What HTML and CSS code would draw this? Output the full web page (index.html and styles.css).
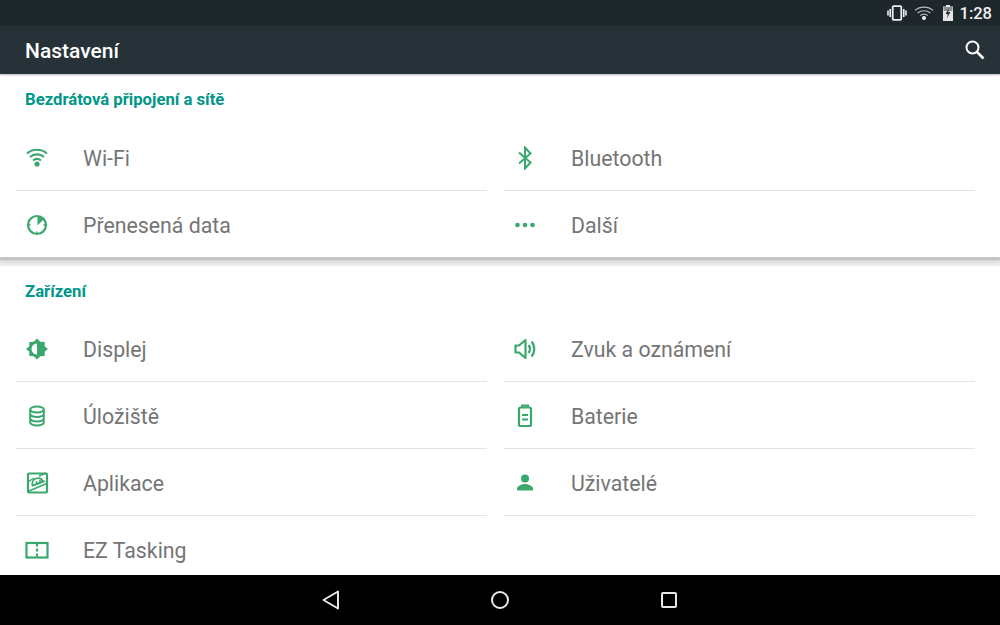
FILE: index.html
```html
<!DOCTYPE html>
<html lang="cs">
<head>
    <meta charset="UTF-8">
    <meta name="viewport" content="width=device-width, initial-scale=1.0">
    <title>Nastavení</title>
    <link rel="stylesheet" href="styles.css">
</head>
<body>
    <div class="screen">
        <div class="status-bar">
            <svg class="st-vibrate" width="20" height="16" viewBox="0 0 20 16"><rect x="5.7" y="1.2" width="8.6" height="13.6" rx="1" fill="none" stroke="#eee" stroke-width="1.8"/><path d="M3.2 4v8M1 5.5v5M16.8 4v8M19 5.5v5" stroke="#eee" stroke-width="1.6" fill="none"/></svg>
            <svg class="st-wifi" width="20" height="16" viewBox="0 0 20 16"><path d="M1 5.4C6 1 14 1 19 5.4M3.6 8C7.2 5 12.8 5 16.4 8M6.2 10.4C8.4 8.8 11.6 8.8 13.8 10.4" stroke="#bbb" stroke-width="1.2" fill="none"/><circle cx="10" cy="13" r="2" fill="#f2f2f2"/></svg>
            <svg class="st-battery" width="12" height="16" viewBox="0 0 12 16"><path d="M4 0h4v1.5h3V16H1V1.5h3z" fill="#e6e6e6"/><path d="M1.5 2h9v4h-9z" fill="#8b9092"/><path d="M7 3 3.5 9h2.2L5 13l3.5-6H6.3z" fill="#263238"/></svg>
            <span class="clock">1:28</span>
        </div>
        <header class="app-bar">
            <h1>Nastavení</h1>
            <svg width="24" height="24" viewBox="0 0 24 24"><circle cx="9.5" cy="9.5" r="6" fill="none" stroke="#fff" stroke-width="2"/><path d="M14 14 20.5 20.5" stroke="#fff" stroke-width="2.5" fill="none"/></svg>
        </header>

        <main class="content">
            <section class="card card-wireless">
                <h2>Bezdrátová připojení a sítě</h2>
                <div class="grid">
                    <div class="item">
                        <span class="icon"><svg width="24" height="24" viewBox="0 0 24 24"><path d="M2 7.5C7.5 2.5 16.5 2.5 22 7.5M5 11C9 7.5 15 7.5 19 11M8 14.5C10.3 12.7 13.7 12.7 16 14.5" fill="none" stroke="#3aa76d" stroke-width="2.1"/><circle cx="12" cy="18" r="2.6" fill="#3aa76d"/></svg></span>
                        <span class="label">Wi-Fi</span>
                    </div>
                    <div class="item">
                        <span class="icon"><svg width="24" height="24" viewBox="0 0 24 24"><path d="M6 6.5 17.5 16.5 12 22.5V1.5l5.500 6L6 17.500" fill="none" stroke="#3aa76d" stroke-width="2"/></svg></span>
                        <span class="label">Bluetooth</span>
                    </div>
                    <div class="item last">
                        <span class="icon"><svg width="24" height="24" viewBox="0 0 24 24"><circle cx="12" cy="12" r="9" fill="none" stroke="#3aa76d" stroke-width="2.2"/><path d="M12.5 12.5 12.5 3A9 9 0 0 1 19 6z" fill="#3aa76d"/><path d="M3 12h2.5M21 12h-2.5M12 21v-2.5" stroke="#3aa76d" stroke-width="1.5"/></svg></span>
                        <span class="label">Přenesená data</span>
                    </div>
                    <div class="item last">
                        <span class="icon"><svg width="24" height="24" viewBox="0 0 24 24"><circle cx="4.5" cy="12" r="2.3" fill="#3aa76d"/><circle cx="12" cy="12" r="2.3" fill="#3aa76d"/><circle cx="19.5" cy="12" r="2.3" fill="#3aa76d"/></svg></span>
                        <span class="label">Další</span>
                    </div>
                </div>
            </section>

            <section class="card card-device">
                <h2>Zařízení</h2>
                <div class="grid">
                    <div class="item">
                        <span class="icon"><svg width="24" height="24" viewBox="0 0 24 24"><path d="M12 1.5l3.2 3.3 4.5.1.100 4.500L23 12l-3.200 2.600-.1 4.500-4.500.1L12 22.500l-3.200-3.300-4.500-.1-.1-4.500L1 12l3.200-2.600.1-4.500 4.500-.1z" fill="#3aa76d"/><path d="M12 6.5a5.5 5.5 0 0 0 0 11z" fill="#fff"/></svg></span>
                        <span class="label">Displej</span>
                    </div>
                    <div class="item">
                        <span class="icon"><svg width="24" height="24" viewBox="0 0 24 24"><path d="M2.5 8.5v7H6l6.500 5.500V3L6 8.500z" fill="none" stroke="#3aa76d" stroke-width="2.2" stroke-linejoin="round"/><path d="M15.5 8c1.9 2.5 1.9 5.500 0 8M18.5 4.500c3.600 4 3.600 11 0 15" fill="none" stroke="#3aa76d" stroke-width="2.2"/></svg></span>
                        <span class="label">Zvuk a oznámení</span>
                    </div>
                    <div class="item">
                        <span class="icon"><svg width="24" height="24" viewBox="0 0 24 24"><ellipse cx="12" cy="5.5" rx="6.8" ry="3" fill="none" stroke="#3aa76d" stroke-width="2"/><path d="M5.2 5.5v13c0 1.600 3 3 6.800 3s6.800-1.400 6.800-3v-13M5.200 10c0 1.600 3 3 6.800 3s6.800-1.400 6.800-3M5.200 14.500c0 1.600 3 3 6.800 3s6.800-1.400 6.800-3" fill="none" stroke="#3aa76d" stroke-width="2"/></svg></span>
                        <span class="label">Úložiště</span>
                    </div>
                    <div class="item">
                        <span class="icon"><svg width="24" height="24" viewBox="0 0 24 24"><path d="M9 3V1.5h6V3" fill="none" stroke="#3aa76d" stroke-width="2"/><rect x="6" y="3.5" width="12" height="18.5" rx="1.5" fill="none" stroke="#3aa76d" stroke-width="2.2"/><path d="M9 11h6M9 15.5h6" stroke="#3aa76d" stroke-width="2"/></svg></span>
                        <span class="label">Baterie</span>
                    </div>
                    <div class="item">
                        <span class="icon"><svg width="24" height="24" viewBox="0 0 24 24"><rect x="3" y="2.5" width="19" height="19" rx="1" fill="none" stroke="#3aa76d" stroke-width="2.2"/><path d="M3 11 9 7M14 5l7-3M3 20.5 21.5 12.5M8 14.5 20 10" stroke="#3aa76d" stroke-width="1.5"/><path d="M7.5 14.5c-1-3.300.8-6 3.500-7 3-1 5.800.3 7 3z" fill="none" stroke="#3aa76d" stroke-width="1.8"/><circle cx="11.5" cy="11" r="1" fill="#3aa76d"/><circle cx="15" cy="10" r="1" fill="#3aa76d"/></svg></span>
                        <span class="label">Aplikace</span>
                    </div>
                    <div class="item">
                        <span class="icon"><svg width="24" height="24" viewBox="0 0 24 24"><circle cx="12" cy="7.5" r="4" fill="#3aa76d"/><path d="M4 19.5v-2c0-2.700 5.300-4.500 8-4.500s8 1.800 8 4.500v2z" fill="#3aa76d"/></svg></span>
                        <span class="label">Uživatelé</span>
                    </div>
                    <div class="item last">
                        <span class="icon"><svg width="24" height="24" viewBox="0 0 24 24"><rect x="1.5" y="5" width="21" height="14.5" fill="none" stroke="#3aa76d" stroke-width="2.2"/><path d="M12 6v2.500M12 10.500v3M12 15.500v3" stroke="#3aa76d" stroke-width="2.2"/></svg></span>
                        <span class="label">EZ Tasking</span>
                    </div>
                </div>
            </section>
        </main>

        <nav class="nav-bar">
            <svg width="18" height="20" viewBox="0 0 18 20"><path d="M16 1.5v17L1.5 10z" fill="none" stroke="#e8e8e8" stroke-width="2" stroke-linejoin="round"/></svg>
            <svg width="20" height="20" viewBox="0 0 20 20"><circle cx="10" cy="10" r="8" fill="none" stroke="#e8e8e8" stroke-width="2"/></svg>
            <svg width="18" height="18" viewBox="0 0 18 18"><rect x="2" y="2" width="14" height="14" rx="1" fill="none" stroke="#e8e8e8" stroke-width="2"/></svg>
        </nav>
    </div>
</body>
</html>
```

FILE: styles.css
```css
* {
    box-sizing: border-box;
}
html, body {
    margin: 0;
    padding: 0;
    height: 100%;
    overflow: hidden;
}
body {
    font-family: 'Roboto', 'Liberation Sans', sans-serif;
    background-color: #eeeeee;
}
.screen {
    width: 1000px;
    height: 625px;
    display: flex;
    flex-direction: column;
}
.status-bar {
    height: 26px;
    background-color: #1e272c;
    display: flex;
    align-items: center;
    justify-content: flex-end;
    padding-right: 8px;
    color: #f2f2f2;
}
.status-bar svg {
    display: block;
}
.st-vibrate {
    margin-right: 7px;
}
.st-wifi {
    margin-right: 8px;
}
.st-battery {
    margin-right: 6px;
}
.clock {
    font-size: 16.5px;
    font-weight: 500;
}
.app-bar {
    height: 48px;
    background-color: #263238;
    display: flex;
    align-items: center;
    justify-content: space-between;
    padding: 0 13px 0 25px;
    box-shadow: 0 1px 2px rgba(0,0,0,0.3);
    z-index: 2;
}
.app-bar h1 {
    margin: 2px 0 0;
    font-size: 21px;
    font-weight: 500;
    color: #ffffff;
}
.content {
    flex: 1;
    min-height: 0;
    overflow: hidden;
    display: flex;
    flex-direction: column;
}
.card {
    background-color: #ffffff;
    flex: none;
}
.card h2 {
    margin: 0;
    height: 50px;
    padding-top: 17px;
    padding-left: 25px;
    font-size: 16.7px;
    line-height: 18px;
    font-weight: 700;
    color: #009688;
}
.card-wireless {
    height: 186px;
    border-bottom: 3px solid #c4c4c4;
    box-shadow: 0 2px 4px rgba(0,0,0,0.12);
    z-index: 1;
}
.card-device {
    margin-top: 6px;
    height: 309px;
}
.card-device h2 {
    height: 49px;
}
.grid {
    display: grid;
    grid-template-columns: 471px 471px;
    column-gap: 17px;
    padding-left: 16px;
}
.item {
    height: 67px;
    padding-top: 1px;
    display: flex;
    align-items: center;
    border-bottom: 1px solid #e3e3e3;
}
.item.last {
    border-bottom: none;
    padding-top: 0;
}
.icon {
    width: 42px;
    margin-right: 25px;
    display: flex;
    justify-content: center;
}
.icon svg {
    display: block;
}
.label {
    padding-top: 2px;
    font-size: 21.3px;
    color: #757575;
}
.nav-bar {
    height: 50px;
    background-color: #000000;
    display: flex;
    align-items: center;
    justify-content: center;
    gap: 150px;
    flex: none;
}
.nav-bar svg {
    display: block;
}
```
